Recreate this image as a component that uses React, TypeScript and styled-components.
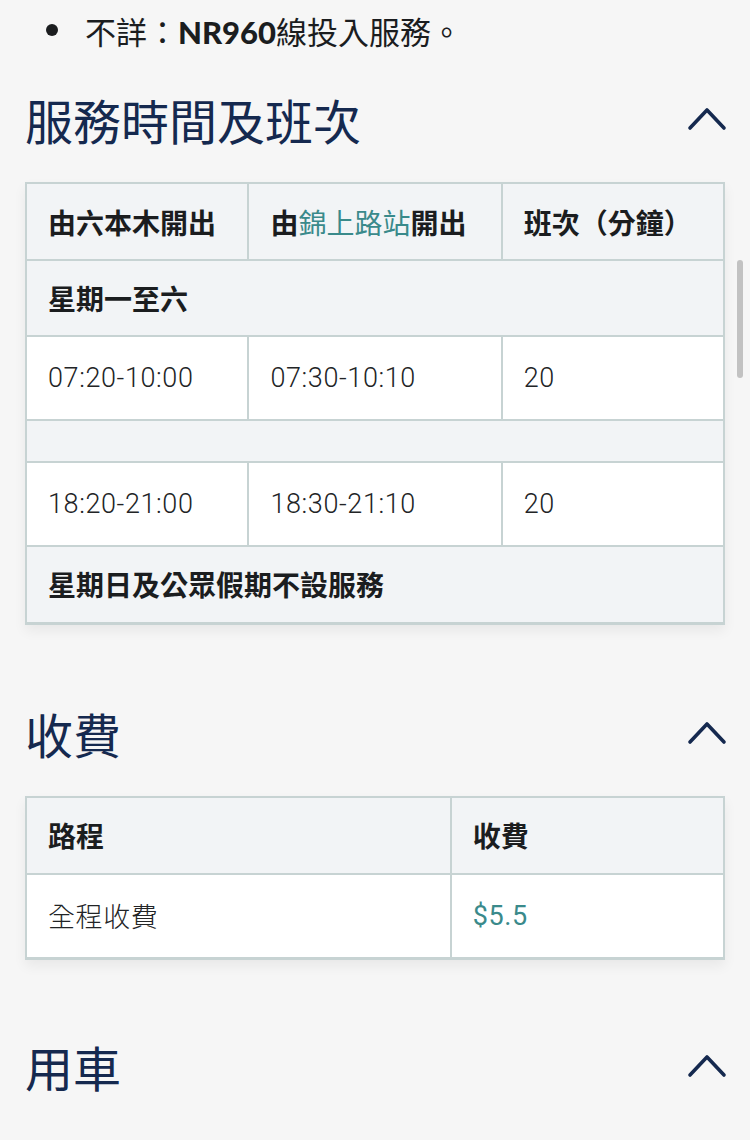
import { FunctionComponent } from 'react';
import styled, { createGlobalStyle } from 'styled-components';

const GlobalStyle = createGlobalStyle`
  body {
    margin: 0;
    background: #f6f6f6;
    font-family: Roboto, "Noto Sans CJK TC", sans-serif;
    color: #1b1d1f;
  }
`;

const Page = styled.div`
  padding: 10px 25px 0;
  position: relative;
`;

const BulletList = styled.ul`
  margin: 0 0 29px;
  padding: 0;
  list-style: none;
`;

const BulletItem = styled.li`
  display: flex;
  align-items: center;
  height: 40px;
  font-size: 31px;
  font-family: "Noto Sans CJK TC", sans-serif;
`;

const Dot = styled.span`
  width: 12px;
  height: 12px;
  border-radius: 50%;
  background: #1b1d1f;
  margin: 0 27px 0 21px;
  flex-shrink: 0;
`;

const Bold = styled.b`
  font-family: Lato, "Noto Sans CJK TC", sans-serif;
  font-weight: 900;
`;

const SectionHead = styled.div`
  height: 80px;
  display: flex;
  align-items: center;
  justify-content: space-between;
  margin-bottom: 23px;
`;

const Heading = styled.h2`
  margin: 0;
  font-size: 48px;
  line-height: 1;
  font-weight: 400;
  color: #15294f;
  font-family: "Noto Sans CJK TC", sans-serif;
`;

const Chevron = styled.svg`
  width: 40px;
  height: 26px;
  margin-right: -2px;
`;

const Table = styled.table<{ $after: number }>`
  width: 700px;
  border-collapse: collapse;
  border: 2px solid #c7d3d3;
  border-bottom-width: 3px;
  box-shadow: 0 6px 12px rgba(0, 0, 0, 0.06);
  margin-bottom: ${(p) => p.$after}px;
  font-size: 27px;
`;

const Row = styled.tr<{ $h: number; $shade?: boolean }>`
  height: ${(p) => p.$h}px;
  background: ${(p) => (p.$shade ? '#f2f4f6' : '#ffffff')};
`;

const Th = styled.th`
  text-align: left;
  font-weight: 700;
  font-size: 28px;
  padding: 0 21px;
  border: 2px solid #c7d3d3;
  font-family: "Noto Sans CJK TC", sans-serif;
`;

const Td = styled.td`
  padding: 0 21px;
  border: 2px solid #c7d3d3;
  letter-spacing: 0.6px;
  font-weight: 300;
  color: #222426;
  font-family: Roboto, "Noto Sans CJK TC", sans-serif;
`;

const Teal = styled.span`
  color: #3a8a8b;
  font-weight: 400;
`;

const ScrollThumb = styled.div`
  position: absolute;
  left: 737px;
  top: 260px;
  width: 6px;
  height: 118px;
  border-radius: 3px;
  background: #c2c2c2;
`;

const UpIcon = () => (
  <Chevron viewBox="0 0 40 26">
    <polyline
      points="3,22 20,4 37,22"
      fill="none"
      stroke="#15294f"
      strokeWidth="3.6"
      strokeLinecap="round"
      strokeLinejoin="round"
    />
  </Chevron>
);

const Section: FunctionComponent<{ title: string }> = ({ title }) => (
  <SectionHead>
    <Heading>{title}</Heading>
    <UpIcon />
  </SectionHead>
);

const schedule = [
  { from: '07:20-10:00', to: '07:30-10:10', freq: '20' },
  { from: '18:20-21:00', to: '18:30-21:10', freq: '20' },
];

const App: FunctionComponent = () => {
  return (
    <Page>
      <GlobalStyle />
      <BulletList>
        <BulletItem>
          <Dot />
          <span>
            不詳：<Bold>NR960</Bold>線投入服務。
          </span>
        </BulletItem>
      </BulletList>

      <Section title="服務時間及班次" />
      <Table $after={68}>
        <colgroup>
          <col style={{ width: 223 }} />
          <col style={{ width: 254 }} />
          <col style={{ width: 223 }} />
        </colgroup>
        <tbody>
          <Row $h={77} $shade>
            <Th>由六本木開出</Th>
            <Th>
              由<Teal>錦上路站</Teal>開出
            </Th>
            <Th>班次（分鐘）</Th>
          </Row>
          <Row $h={76} $shade>
            <Th colSpan={3}>星期一至六</Th>
          </Row>
          <Row $h={84}>
            <Td>{schedule[0].from}</Td>
            <Td>{schedule[0].to}</Td>
            <Td>{schedule[0].freq}</Td>
          </Row>
          <Row $h={42} $shade>
            <Td colSpan={3} />
          </Row>
          <Row $h={84}>
            <Td>{schedule[1].from}</Td>
            <Td>{schedule[1].to}</Td>
            <Td>{schedule[1].freq}</Td>
          </Row>
          <Row $h={77} $shade>
            <Th colSpan={3}>星期日及公眾假期不設服務</Th>
          </Row>
        </tbody>
      </Table>

      <Section title="收費" />
      <Table $after={66}>
        <colgroup>
          <col style={{ width: 426 }} />
          <col style={{ width: 274 }} />
        </colgroup>
        <tbody>
          <Row $h={77} $shade>
            <Th>路程</Th>
            <Th>收費</Th>
          </Row>
          <Row $h={85}>
            <Td>全程收費</Td>
            <Td>
              <Teal>$5.5</Teal>
            </Td>
          </Row>
        </tbody>
      </Table>

      <Section title="用車" />
      <ScrollThumb />
    </Page>
  );
};

export default App;
